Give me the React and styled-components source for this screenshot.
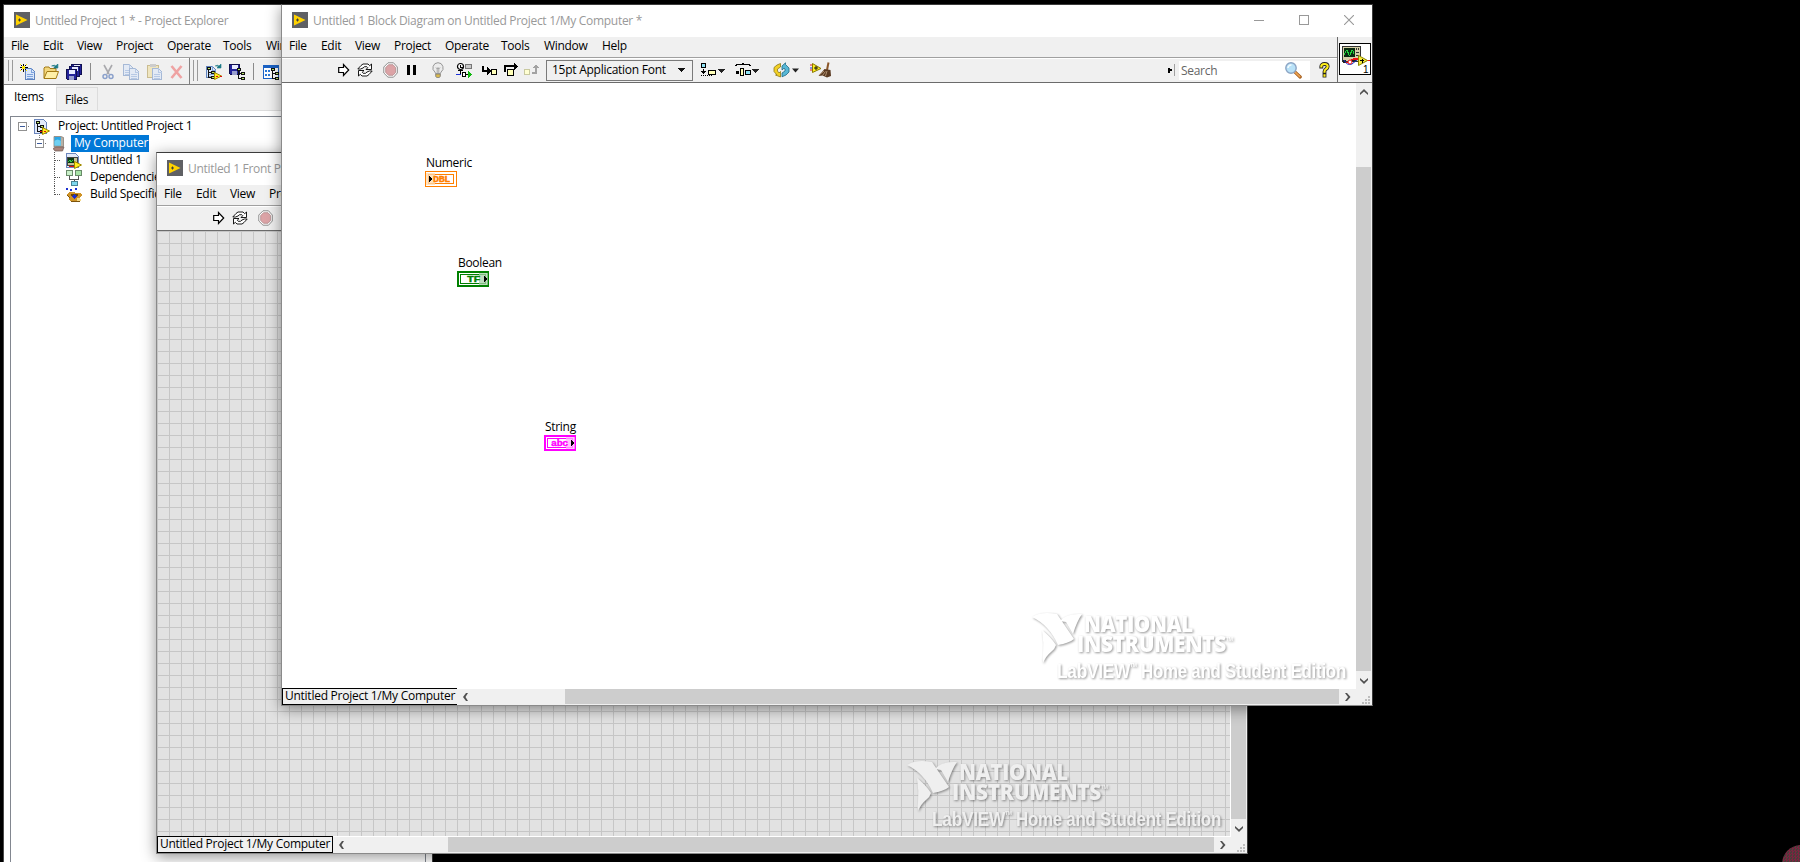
import React from "react";
import styled, { createGlobalStyle } from "styled-components";

const Global = createGlobalStyle`
  * { box-sizing: border-box; }
  html, body { margin: 0; background: #000; overflow: hidden; }
  body {
    font-family: "Open Sans", "Noto Sans", sans-serif;
    font-size: 12px;
    letter-spacing: -0.3px;
    line-height: 16px;
    color: #000;
    white-space: nowrap;
  }
  svg { display: block; flex: none; }
`;

/* ---------- window chrome ---------- */

const Desktop = styled.main`
  position: relative;
  width: 1800px;
  height: 862px;
  overflow: hidden;
  background: #000;
`;

const Frame = styled.section`
  position: absolute;
  left: ${(p) => p.$x}px;
  top: ${(p) => p.$y}px;
  width: ${(p) => p.$w}px;
  height: ${(p) => p.$h}px;
  display: flex;
  flex-direction: column;
  border: 1px solid ${(p) => p.$edge || "#8a8a8a"};
  border-top-color: #3c3c3c;
  border-right-color: #3c3c3c;
  background: #f0f0f0;
  box-shadow: ${(p) => (p.$flat ? "none" : "0 3px 14px rgba(0, 0, 0, 0.42)")};
  overflow: hidden;
`;

const TitleBar = styled.header`
  display: flex;
  align-items: center;
  flex: none;
  height: 32px;
  padding: 0 18px 2px 10px;
  background: #fff;
  color: #999;
`;

const TitleText = styled.span`
  flex: 1;
  padding: 2px 0 0 5px;
  letter-spacing: ${(p) => p.$track || -0.3}px;
`;

const TitleButtons = styled.div`
  display: flex;
  align-items: center;
  gap: 35px;
`;

const MenuBar = styled.nav`
  display: flex;
  align-items: center;
  flex: none;
  height: 20px;
  padding: 0 0 2px 7px;
`;

const MenuItem = styled.span`
  width: ${(p) => p.$w}px;
  flex: none;
`;

const Head = styled.div`
  display: flex;
  flex: none;
  height: 46px;
  border-bottom: 1px solid #6b6b6b;
`;

const HeadMain = styled.div`
  flex: 1;
  min-width: 0;
`;

const Toolbar = styled.div`
  display: flex;
  align-items: flex-start;
  height: 25px;
  padding-top: 3px;
  border-top: 1px solid #a0a0a0;
  box-shadow: inset 0 1px 0 #fff;
`;

const Tool = styled.span`
  flex: none;
  margin-left: ${(p) => p.$gap || 0}px;
  padding-top: 1px;
`;

const FontPicker = styled.div`
  display: flex;
  align-items: center;
  justify-content: space-between;
  flex: none;
  width: 147px;
  height: 21px;
  margin: -1px 0 0 6px;
  padding: 0 7px 1px 5px;
  border: 1px solid #7a7a7a;
  letter-spacing: -0.26px;
`;

const Grow = styled.span`
  flex: 1;
`;

const SearchHandle = styled.div`
  display: flex;
  align-items: center;
  width: 7px;
  height: 12px;
  margin: 3px 4px 0 0;
  border-right: 1px solid #a0a0a0;
`;

const SearchBox = styled.div`
  display: flex;
  align-items: center;
  justify-content: space-between;
  width: 131px;
  height: 19px;
  padding: 0 8px 0 2px;
  background: #fff;
  color: #666;
`;

const HelpSlot = styled.div`
  width: 27px;
  padding: 1px 0 0 9px;
`;

const IconPane = styled.div`
  width: 34px;
  margin-right: 1px;
  padding: 6px 0 0 1px;
  border-left: 1px solid #6b6b6b;
`;

/* ---------- canvas and scroll bars ---------- */

const Body = styled.div`
  display: flex;
  flex: 1;
  min-height: 0;
`;

const Canvas = styled.div`
  position: relative;
  flex: 1;
  background-color: ${(p) => (p.$grid ? "#e2e2e2" : "#fff")};
  background-image: ${(p) =>
    p.$grid
      ? "linear-gradient(to right, #c6c6c6 1px, transparent 1px), linear-gradient(to bottom, #c6c6c6 1px, transparent 1px)"
      : "none"};
  background-size: 12px 12px;
  border-right: ${(p) => (p.$grid ? "1px solid #fff" : "0")};
`;

const VBar = styled.div`
  display: flex;
  flex-direction: column;
  width: 15px;
  margin-right: 1px;
`;

const VEnd = styled.div`
  display: flex;
  align-items: center;
  justify-content: center;
  flex: none;
  height: 17px;
  padding-bottom: ${(p) => (p.$raised ? 2 : 0)}px;
`;

const VThumb = styled.div`
  flex: 1;
  margin-top: 67px;
  background: #cdcdcd;
`;

const Footer = styled.div`
  display: flex;
  flex: none;
  height: 17px;
`;

const Target = styled.div`
  width: ${(p) => (p.$open ? 175 : 176)}px;
  height: 17px;
  padding: 0 0 0 2px;
  border: 1px solid #000;
  border-right-width: ${(p) => (p.$open ? 0 : 1)}px;
  line-height: 14px;
  letter-spacing: -0.26px;
  overflow: hidden;
`;

const HBar = styled.div`
  display: flex;
  flex: 1;
  height: 17px;
  padding-bottom: 1px;
  border-top: 1px solid #fff;
`;

const HEnd = styled.div`
  display: flex;
  align-items: center;
  justify-content: center;
  flex: none;
  width: 17px;
  padding-right: ${(p) => (p.$far ? 1 : 0)}px;
`;

const HThumb = styled.div`
  flex: 1;
  margin-left: ${(p) => p.$offset}px;
  background: #cdcdcd;
`;

const Corner = styled.div`
  display: flex;
  align-items: flex-end;
  justify-content: flex-end;
  width: 16px;
  padding: 0 2px 1px 0;
`;

const Watermark = styled.svg`
  position: absolute;
  right: ${(p) => p.$right}px;
  bottom: 3px;
  filter: drop-shadow(1px 1px 1px rgba(0, 0, 0, 0.4));
`;

const Node = styled.div`
  position: absolute;
  left: ${(p) => p.$x}px;
  top: ${(p) => p.$y}px;
  display: flex;
  flex-direction: column;
`;

const NodeLabel = styled.span`
  height: 17px;
  padding: 1px 0 0 1px;
`;

/* ---------- project explorer parts ---------- */

const ExplorerTools = styled.div`
  display: flex;
  flex: none;
  height: 28px;
  border-top: 1px solid #a0a0a0;
  border-bottom: 1px solid #808080;
  box-shadow: inset 0 1px 0 #fff;
`;

const ToolGroup = styled.div`
  display: flex;
  align-items: flex-start;
  height: 26px;
  padding-top: 5px;
  border-right: ${(p) => (p.$last ? "0" : "1px solid #808080")};
`;

const Grip = styled.span`
  width: 5px;
  height: 21px;
  margin: -3px 0 0 ${(p) => p.$gap}px;
  border: solid #9a9a9a;
  border-width: 0 1px;
`;

const Divider = styled.span`
  width: 1px;
  height: 17px;
  margin-left: ${(p) => p.$gap}px;
  background: #8a8a8a;
`;

const Tabs = styled.div`
  display: flex;
  align-items: flex-end;
  flex: none;
  height: 26px;
  padding-top: 1px;
  box-shadow: inset 0 -1px 0 #dcdcdc;
`;

const Tab = styled.span`
  height: ${(p) => (p.$active ? 26 : 24)}px;
  width: ${(p) => (p.$active ? 52 : 42)}px;
  padding: ${(p) => (p.$active ? "4px 0 0 10px" : "4px 0 0 8px")};
  border: ${(p) => (p.$active ? "0" : "1px solid #dcdcdc")};
  background: ${(p) => (p.$active ? "#fff" : "#f0f0f0")};
`;

const TabPage = styled.div`
  display: flex;
  flex: 1;
  padding: 5px 6px 0;
  background: #fff;
`;

const Tree = styled.div`
  flex: 1;
  padding-top: 1px;
  border: 1px solid #828790;
  border-bottom: 0;
`;

const TreeRow = styled.div`
  display: flex;
  align-items: center;
  height: 17px;
  padding-left: ${(p) => p.$indent}px;
`;

const TreeText = styled.span`
  height: 17px;
  margin-left: ${(p) => p.$gap}px;
  padding: 0 ${(p) => (p.$selected ? 1 : 0)}px 0 3px;
  background: ${(p) => (p.$selected ? "#0078d7" : "transparent")};
  color: ${(p) => (p.$selected ? "#fff" : "#000")};
  letter-spacing: ${(p) => (p.$selected ? -0.2 : -0.3)}px;
`;

const Bubble = styled.div`
  position: absolute;
  left: 1782px;
  top: 845px;
  width: 38px;
  height: 38px;
  border-radius: 50%;
  background: repeating-conic-gradient(#7c2440 0 25%, #46403a 0 50%) 0 0 / 3px 3px;
`;

/* ---------- drawings ---------- */

const Art = ({ w = 16, h = 16, soft, children }) => (
  <svg width={w} height={h} viewBox={`0 0 ${w} ${h}`} shapeRendering={soft ? "auto" : "crispEdges"}>
    {children}
  </svg>
);

const Logo = () => (
  <Art soft>
    <rect width="16" height="16" fill="#5f6064" />
    <path d="M2 2.5 13.5 8 2 13.5z" fill="#ffd200" />
    <path d="M4 8h3M5.5 6.5v3" stroke="#3d3d3d" strokeWidth="1" />
  </Art>
);

const Minimize = () => (
  <Art w={10} h={10}><rect y="5" width="10" height="1" fill="#999" /></Art>
);
const Maximize = () => (
  <Art w={10} h={10}><rect x=".5" y=".5" width="9" height="9" fill="none" stroke="#999" /></Art>
);
const Close = () => (
  <Art w={10} h={10} soft><path d="m0 0 10 10M10 0 0 10" stroke="#999" strokeWidth="1.1" /></Art>
);

const Run = () => (
  <Art w={12} soft>
    <path d="M.7 5.500h4.800V2.500L10.700 8 5.500 13.500v-3H.7z" fill="#fff" stroke="#000" strokeWidth="1.200" />
  </Art>
);

/* two folded arrows chasing each other */
const RunLoop = () => (
  <Art soft>
    <g fill="#fff" stroke="#000" strokeWidth=".9">
      <path d="M3.500 7 .8 7 4 3.500 6 2h5l1.700 1.700L14.500 2v5.500H9L10.800 5.700 9.800 4.700H7.500L6 6z" />
      <path d="M12.500 9h2.700L12 12.500 10 14H5l-1.700-1.700L1.500 14V8.500H7l-1.800 1.800 1 1h2.300L10 10z" />
    </g>
  </Art>
);

const Abort = () => (
  <Art w={15} soft>
    <path d="M5 .8h5.500L14.300 5v6l-3.800 4.200H5L.8 11V5z" fill="#fff" stroke="#8c8c8c" />
    <path d="M5.500 2.700h4.500l2.600 2.900v4.800L10 13.300H5.500l-2.800-2.900V5.600z" fill="#dca3a6" stroke="#b08a8c" strokeWidth=".8" />
  </Art>
);

const Pause = () => (
  <Art w={10}><path d="M0 3h3v10H0zM6 3h3v10H6z" fill="#000" /></Art>
);

const Bulb = () => (
  <Art w={12} soft>
    <path d="M6 .7a5.200 5.200 0 0 0-3 9.400l.6 1.600h4.800l.6-1.600A5.200 5.200 0 0 0 6 .7z" fill="#ececec" stroke="#979797" />
    <path d="M4 5.500 5.200 7 6 5.500 6.800 7 8 5.500M5.200 7v4M6.800 7v4" fill="none" stroke="#8d8d8d" strokeWidth=".7" />
    <path d="M3.700 12h4.600v2.500L7 15.600H5l-1.300-1z" fill="#d9b94e" stroke="#777" strokeWidth=".8" />
  </Art>
);

const Retain = () => (
  <Art>
    <circle cx="4.500" cy="4.500" r="3" fill="#fff" stroke="#000" strokeWidth="1.200" shapeRendering="auto" />
    <path d="M4 3h1v2h2v1H4z" fill="#000" />
    <path d="M9.500 2.500h6v4h-6z" fill="#c9c9c9" stroke="#777" />
    <path d="M4 8h1v4H4zM2 8h5v1H2zM10 12h3v1h-3z" fill="#000" />
    <path d="M0 12h5v1H0z" fill="#1b31d8" />
    <path d="M6.500 10.500h3v4h-3z" fill="#fff" stroke="#000" />
    <path d="m12 9 4 4-4 3z" fill="#10b810" />
  </Art>
);

const StepInto = () => (
  <Art>
    <path d="M1 4h2v4h3V5l4 4-4 4v-3H1z" fill="#000" />
    <rect x="10.500" y="7.500" width="5" height="5" fill="#ffffb8" stroke="#000" />
  </Art>
);
const StepOver = () => (
  <Art w={15}>
    <path d="M0 10V3h10V1l4 3-4 4V5H2v5z" fill="#000" />
    <rect x="3.500" y="7.500" width="6" height="6" fill="#ffffb8" stroke="#000" />
  </Art>
);
const StepOut = () => (
  <Art>
    <rect x=".5" y="7.500" width="5" height="5" fill="#ffffd2" stroke="#c9c9a0" />
    <path d="M8 12v-2h3V6H9l3-4 3 4h-2v6z" fill="#a2a2a2" />
  </Art>
);

const Caret = () => (
  <Art w={7} h={4}><path d="M0 0h7v1H6v1H5v1H4v1H3V3H2V2H1V1H0z" fill="#111" /></Art>
);

const DropMark = () => <path d="M17 7h7v1h-1v1h-1v1h-1v1h-1v-1h-1V9h-1V8h-1z" fill="#222" />;

const Align = () => (
  <Art w={24}>
    <rect x=".5" y="1.500" width="4" height="4" fill="#8fe3f5" stroke="#000" />
    <path d="M2 7h1v3H2zM0 9h5v1H4v1H3v1H2v-1H1v-1H0zM0 13h1v1H0zM2 13h1v1H2zM4 13h1v1H4zM6 13h1v1H6zM8 13h1v1H8zM10 13h1v1h-1z" fill="#000" />
    <rect x="7.500" y="8.500" width="7" height="4" fill="#ffffb8" stroke="#000" />
    <DropMark />
  </Art>
);

const Distribute = () => (
  <Art w={25}>
    <path d="M0 4V3h1V2h6V1h2v1h6v1h1v1h-2V3H2v1zM1 9h3v3H1z" fill="#000" />
    <rect x="5.500" y="6.500" width="3" height="7" fill="#ffffb8" stroke="#000" />
    <rect x="10.500" y="8.500" width="5" height="4" fill="#8fe3f5" stroke="#000" />
    <DropMark />
  </Art>
);

const Reorder = () => (
  <Art w={26} soft>
    <path d="M7.500 1.500 4 3 1 5.500v4L4 13H2.500L7.500 15V9.500L6 11 4.500 9V7l3-2z" fill="#f2d024" stroke="#8f7a18" strokeWidth=".8" />
    <path d="M9 4 12.500.8V2.500L16 6v4l-3 3-4 1.800V11l3-2V7l-1-.8L9 8z" fill="#57b8d6" stroke="#1f6a86" strokeWidth=".8" />
    <path d="M19 6.500h7L22.500 10.500z" fill="#222" />
  </Art>
);

const CleanUp = () => (
  <Art w={22} soft>
    <path d="M0 3h4M0 8h2" stroke="#e02020" />
    <path d="M0 6h2" stroke="#2030d0" />
    <path d="M2.500 1.500 11 6.500 2.500 10.500z" fill="#ffee22" stroke="#8a7a00" />
    <path d="M4 6h4M6 4v4" stroke="#111" />
    <path d="M18.500.5 17 8" stroke="#8a5527" strokeWidth="2" />
    <path d="M14.500 7 20.500 8l.5 6-4 1.500-4.500-2-4 .5z" fill="#5a3a22" />
    <path d="m9 13 5-4M12.500 13.500l3-4M15.500 14l1.500-5" stroke="#c6a887" strokeWidth=".8" />
  </Art>
);

const Lens = () => (
  <Art w={17} h={17} soft>
    <path d="m9.800 9.800 5.400 5.200" stroke="#a25c1c" strokeWidth="3.200" strokeLinecap="round" />
    <path d="m9.800 9.800 5 4.800" stroke="#eda352" strokeWidth="1.600" strokeLinecap="round" />
    <circle cx="6" cy="6" r="5.200" fill="#b9e2f8" stroke="#8ba4c4" strokeWidth="1.400" />
    <path d="M3 6a3.200 3.200 0 0 1 3.500-3" stroke="#f3fbff" strokeWidth="1.600" fill="none" />
  </Art>
);

const Help = () => (
  <Art w={11} soft>
    <g fill="none" strokeLinecap="square">
      <path d="M2.300 4.500Q2.300 2 5.500 2T8.700 4.500Q8.700 6 7 7 5.500 8 5.500 9.800M5.500 13.300v.4" stroke="#222" strokeWidth="3.800" />
      <path d="M2.300 4.500Q2.300 2 5.500 2T8.700 4.500Q8.700 6 7 7 5.500 8 5.500 9.800M5.500 13.300v.4" stroke="#ffef1a" strokeWidth="2.100" />
    </g>
  </Art>
);

const ViIcon = () => (
  <Art w={32} h={32}>
    <rect x=".5" y=".5" width="31" height="31" fill="#fff" stroke="#000" />
    <rect x="3.500" y="3.500" width="18" height="15" fill="#d6cfa6" stroke="#333" />
    <rect x="5" y="5" width="11" height="9" fill="#0a2a10" />
    <path d="m5 12 2-4 1-1 2 5h1l2-5 1 1 1 3" fill="none" stroke="#21d43a" />
    <path d="M17 5h1v2h-1zM19 5h1v2h-1zM17 9h3v1h-3zM17 12h3v1h-3z" fill="#333" />
    <path d="M4 17h3v3H4zM13 16h4v3h-4z" fill="#222" />
    <path d="M5 17q3 6 8 4l5-4" stroke="#1430d0" fill="none" shapeRendering="auto" />
    <path d="M8 20q5-5 11-4M25 17.500h6" stroke="#e11" strokeWidth="1.400" fill="none" />
    <circle cx="11" cy="19" r="2" fill="#fff" stroke="#e11" shapeRendering="auto" />
    <path d="m19.500 12.500 9 5-9 5z" fill="#f4e93a" stroke="#8a8200" shapeRendering="auto" />
    <path d="M21 17h4v1h-4zM22.500 15.500h1v4h-1z" fill="#000" />
    <text x="24" y="29.500" fontFamily="Liberation Sans, sans-serif" fontSize="10" fill="#000">1</text>
  </Art>
);

const chevrons = {
  up: "M0 6 4 2 8 6V8L4 4.500 0 8z",
  down: "M0 2v2l4 4 4-4V2L4 5.500z",
  left: "M6 0H4L1 4l3 4h2L3.500 4z",
  right: "M2 0h2l3.500 4L4 8H2l3-4z",
};
const Chevron = ({ dir }) => (
  <Art w={8} h={8} soft><path d={chevrons[dir]} fill="#505050" /></Art>
);

const SizeGrip = () => (
  <Art w={8} h={8}>
    <path d="M6 0h2v2H6zM3 3h2v2H3zM6 3h2v2H6zM0 6h2v2H0zM3 6h2v2H3zM6 6h2v2H6z" fill="#bdbdbd" />
  </Art>
);

const NiMark = ({ tone, right }) => (
  <Watermark $right={right} width="324" height="78" viewBox="0 0 324 78">
    <g fill={tone}>
      <path d="M3 10q9-6 25-3l17 25q-5 4-16 6Q20 18 3 10z" />
      <path d="M31 14q6-8 22-7-5 7-9 20L37 15z" />
      <path d="M13 23q8 6 14 15-1 4-5 7-5 4-8 11-1-4 0-8 1-12-1-25z" />
      <g fontFamily="Open Sans, sans-serif" fontWeight="800" fontSize="22">
        <text x="55" y="24.500" textLength="109" lengthAdjust="spacingAndGlyphs">NATIONAL</text>
        <text x="48" y="45" textLength="149" lengthAdjust="spacingAndGlyphs">INSTRUMENTS</text>
        <text x="197" y="34" fontSize="5" fontWeight="600">TM</text>
      </g>
      <g fontFamily="Liberation Sans Narrow, Liberation Sans, sans-serif" fontWeight="700" fontSize="20.500">
        <text x="28" y="71" textLength="73" lengthAdjust="spacingAndGlyphs">LabVIEW</text>
        <text x="101" y="60" fontSize="5">TM</text>
        <text x="112" y="71" textLength="205" lengthAdjust="spacingAndGlyphs">Home and Student Edition</text>
      </g>
    </g>
  </Watermark>
);

const Terminal = ({ color, tint, code, heavy, indicator, textX, textW }) => (
  <Art w={32}>
    <rect width="32" height="16" fill={color} />
    <rect x={heavy ? 2 : 1} y={heavy ? 2 : 1} width={heavy ? 28 : 30} height={heavy ? 12 : 14} fill="#fff" />
    <rect x="3.500" y="3.500" width="25" height="9" fill="#fff" stroke={color} />
    <rect x={indicator ? 1 : 22} y="2" width="9" height="12" fill={tint} fillOpacity=".75" />
    <path d={indicator ? "M4 5h1v1h1v1h1v2H6v1H5v1H4z" : "M27 5h1v1h1v1h1v2h-1v1h-1v1h-1z"} fill="#000" />
    <text x={textX} y="10.700" textLength={textW} lengthAdjust="spacingAndGlyphs" fill={color}
      stroke={color} strokeWidth=".35"
      fontFamily="Liberation Mono, monospace" fontWeight="700" fontSize="8.500">{code}</text>
  </Art>
);

/* explorer toolbar */
const Page = ({ x = 0, y = 0 }) => (
  <g transform={`translate(${x} ${y})`}>
    <path d="M.5.500h6l3 3v8h-9z" fill="#d8e6fa" stroke="#5f83bd" />
    <path d="M6 0v4h4M2 6h6M2 8h6M2 10h6" fill="none" stroke="#7fa3dc" />
  </g>
);
const NewDoc = () => (
  <Art>
    <Page x={5} y={4} />
    <path d="M3 0h1v3H3zM3 5h1v3H3zM0 3h2v1H0zM5 3h3v1H5zM1 1h1v1H1zM5 1h1v1H5zM1 5h1v1H1zM5 5h1v1H5z" fill="#000" />
    <path d="M2 2h3v3H2zM0 0h1v1H0zM6 6h1v1H6zM6 0h1v1H6zM0 6h1v1H0z" fill="#ffe800" />
  </Art>
);
const OpenDoc = () => (
  <Art soft>
    <path d="M1 14V4l1-1h4l1 1.500h6V7" fill="#f3d77c" stroke="#a27a16" />
    <path d="M1 14.500 4 7.500h11.500l-2.500 7z" fill="#fff0a8" stroke="#a27a16" />
    <path d="M8.500 2q3-2 5.500 1M14.800 0v4h-4z" fill="#1d7a86" stroke="#1d7a86" strokeWidth=".8" />
  </Art>
);
const Disk = ({ x = 0, y = 0 }) => (
  <g transform={`translate(${x} ${y})`}>
    <path d="M.5.500h10v10h-9l-1-1z" fill="#23239a" stroke="#10104f" />
    <path d="M3 1h6v4H3z" fill="#e8ecff" />
    <path d="M3 7h5v4H3z" fill="#9aa0cf" />
  </g>
);
const SaveAll = () => <Art><Disk x={5} y={0} /><Disk x={3} y={2} /><Disk x={0} y={5} /></Art>;
const Cut = () => (
  <Art w={12} soft>
    <path d="m2 1 5 9M10 1l-5 9" stroke="#a9a9ad" strokeWidth="1.600" />
    <circle cx="3" cy="12.500" r="2" fill="none" stroke="#8ba1cb" strokeWidth="1.500" />
    <circle cx="9" cy="12.500" r="2" fill="none" stroke="#8ba1cb" strokeWidth="1.500" />
  </Art>
);
const Copy = () => <Art><g opacity=".5"><Page /><Page x={6} y={4} /></g></Art>;
const Paste = () => (
  <Art>
    <g opacity=".5">
      <path d="M.5 1.500h11v12H.5z" fill="#efdb8f" stroke="#a58a35" />
      <path d="M3 0h6v3H3z" fill="#aaa" />
      <Page x={5} y={4} />
    </g>
  </Art>
);
const Remove = () => (
  <Art w={13} soft><path d="m1.500 2 10 12M11.500 2l-10 12" stroke="#efa3a3" strokeWidth="2.600" /></Art>
);
const Branches = ({ x = 0, y = 0 }) => (
  <g transform={`translate(${x} ${y})`}>
    <path d="M1 1h1v10H1zM1 5h5v1H1zM1 10h5v1H1z" fill="#111" />
    <path d="M0 0h4v3H0zM4 4h4v3H4zM4 9h4v3H4z" fill="#111" />
    <path d="M1 1h2v1H1zM5 5h2v1H5zM5 10h2v1H5z" fill="#b9e86a" />
  </g>
);
const OpenProject = () => (
  <Art>
    <Page x={0} y={2} />
    <Branches x={1} y={3} />
    <path d="M9 2q3-2 5 1M15 0v4h-4z" fill="#1d7a86" stroke="#1d7a86" strokeWidth=".6" shapeRendering="auto" />
    <path d="m8.500 8.500 7 3.500-7 3.500z" fill="#ffee22" stroke="#a08a00" shapeRendering="auto" />
    <path d="M10 12h2M14 12h2" stroke="#d11" />
  </Art>
);
const SaveProject = () => <Art><Disk /><Branches x={8} y={4} /></Art>;
const ClassBrowser = () => (
  <Art>
    <rect x=".5" y="1.500" width="15" height="13" fill="#fff" stroke="#1b62c4" />
    <path d="M0 1h16v3H0z" fill="#1b62c4" />
    <path d="M2 6h2v2H2zM5 6h2v2H5zM2 10h2v2H2zM5 10h2v2H5z" fill="#2a78d8" />
    <Branches x={8} y={4} />
  </Art>
);

/* project tree */
const Toggle = ({ up }) => (
  <Art w={12} h={17}>
    {up && <path d="M4 0h1v1H4zM4 2h1v1H4z" fill="#777" />}
    <rect x=".5" y="4.500" width="8" height="8" fill="#fff" stroke="#919191" />
    <path d="M2 8h5v1H2z" fill="#3c5a9a" />
    <path d="M10 8h1v1h-1z" fill="#777" />
  </Art>
);
const Elbow = ({ last }) => (
  <svg width="8" height="17" viewBox="0 0 8 17" shapeRendering="crispEdges">
    <path d={last ? "M.5 0v9" : "M.5 0v17"} stroke="#555" strokeDasharray="1 1" />
    <path d="M1 8.500h6" stroke="#555" strokeDasharray="1 1" />
  </svg>
);
const ProjectIcon = () => (
  <Art>
    <path d="M.5.500h9l3 3v11H.5z" fill="#e2eafa" stroke="#6b86bd" />
    <Branches x={2} y={2} />
    <path d="m8.500 8.500 7 3.500-7 3.500z" fill="#ffee22" stroke="#a08a00" shapeRendering="auto" />
    <path d="M6 12h2M10 12h2" stroke="#d11" />
  </Art>
);
const ComputerIcon = () => (
  <Art w={12} soft>
    <path d="M1 .5h7l2.500 1v9l-2.500.5H1z" fill="#b9b1a5" stroke="#7d746b" strokeWidth=".7" />
    <path d="M1.500 1h6.300v8.500H1.500z" fill="#2aa6e6" />
    <path d="M1.500 5q3-3 6.300 0v4.500H1.500z" fill="#6fd0f2" />
    <path d="M0 12.500 3 11h8l-1.500 4H2z" fill="#a9847c" stroke="#6f5a55" strokeWidth=".7" />
  </Art>
);
const ViFileIcon = () => (
  <Art>
    <path d="M.5.500h9l3 3v11H.5z" fill="#e2eafa" stroke="#6b86bd" />
    <rect x="1" y="4" width="10" height="8" fill="#c9c39a" stroke="#444" />
    <rect x="2" y="5" width="6" height="5" fill="#0b3a16" />
    <path d="m2 9 2-2 1 2 2-2" stroke="#2fd048" fill="none" />
    <path d="m8.500 8.500 7 3.500-7 3.500z" fill="#ffee22" stroke="#a08a00" shapeRendering="auto" />
    <path d="M3 13h5" stroke="#d11" />
  </Art>
);
const DependenciesIcon = () => (
  <Art>
    <path d="M3.500 5v4h9V5M8 9v3" fill="none" stroke="#555" />
    <rect x=".5" y=".5" width="6" height="5" fill="#c9f0c9" stroke="#6a8a6a" />
    <rect x="9.500" y=".5" width="6" height="5" fill="#a6e3a6" stroke="#6a8a6a" />
    <rect x="5.500" y="11.500" width="6" height="4" fill="#7fd8ee" stroke="#4a8494" />
  </Art>
);
const BuildIcon = () => (
  <Art>
    <path d="M0 1h2v2H0zM4 2h2v2H4zM9 1h2v2H9z" fill="#1c2fd0" />
    <path d="M3 5h5l2 1h4l2 2-2 2v5H5l-2-2v-3L0 8z" fill="#cf9327" />
    <path d="M0 8h1l3 2v1H3zM5 14h9v1H5z" fill="#7d540c" />
    <path d="M5 7h7v2H5z" fill="#6b4608" />
    <path d="M8 7h1v1h1v1h1v1h-1v1H9v1H8v-1H7v-1H6V9h1V8h1z" fill="#1c2fd0" />
    <path d="M11 11h3v1h1v2h-4z" fill="#f4d98a" />
  </Art>
);

/* ---------- composition ---------- */

const menus = [
  ["File", 32], ["Edit", 34], ["View", 39], ["Project", 51],
  ["Operate", 56], ["Tools", 43], ["Window", 58], ["Help", 40],
];

const Menus = ({ count = menus.length }) => (
  <MenuBar>
    {menus.slice(0, count).map(([name, w]) => <MenuItem key={name} $w={w}>{name}</MenuItem>)}
  </MenuBar>
);

const tools = [
  [Run, 56], [RunLoop, 7], [Abort, 10], [Pause, 9], [Bulb, 15],
  [Retain, 12], [StepInto, 9], [StepOver, 7], [StepOut, 5],
];

function ViWindow({ x, y, title, menuCount, grid, hOffset, children }) {
  return (
    <Frame $x={x} $y={y} $w={1092} $h={702}>
      <TitleBar>
        <Logo />
        <TitleText>{title}</TitleText>
        <TitleButtons><Minimize /><Maximize /><Close /></TitleButtons>
      </TitleBar>
      <Head>
        <HeadMain>
          <Menus count={menuCount} />
          <Toolbar>
            {tools.map(([Icon, gap], i) => <Tool key={i} $gap={gap}><Icon /></Tool>)}
            <FontPicker>15pt Application Font<Caret /></FontPicker>
            <Tool $gap={8}><Align /></Tool>
            <Tool $gap={10}><Distribute /></Tool>
            <Tool $gap={13}><Reorder /></Tool>
            <Tool $gap={11}><CleanUp /></Tool>
            <Grow />
            <SearchHandle>
              <Art w={4} h={5}><path d="M0 0h2v1h2v2H2v2H0z" fill="#000" /></Art>
            </SearchHandle>
            <SearchBox>Search<Lens /></SearchBox>
            <HelpSlot><Help /></HelpSlot>
          </Toolbar>
        </HeadMain>
        <IconPane><ViIcon /></IconPane>
      </Head>
      <Body>
        <Canvas $grid={grid}>
          {children}
          <NiMark tone={grid ? "#efefef" : "#fff"} right={grid ? 2 : 3} />
        </Canvas>
        <VBar>
          <VEnd $raised><Chevron dir="up" /></VEnd>
          <VThumb />
          <VEnd><Chevron dir="down" /></VEnd>
        </VBar>
      </Body>
      <Footer>
        <Target $open={!grid}>Untitled Project 1/My Computer</Target>
        <HBar>
          <HEnd><Chevron dir="left" /></HEnd>
          <HThumb $offset={hOffset} />
          <HEnd $far><Chevron dir="right" /></HEnd>
        </HBar>
        <Corner><SizeGrip /></Corner>
      </Footer>
    </Frame>
  );
}

function ProjectExplorer() {
  return (
    <Frame $x={3} $y={4} $w={430} $h={900} $edge="#4a4a4a" $flat>
      <TitleBar>
        <Logo />
        <TitleText $track={-0.33}>Untitled Project 1 * - Project Explorer</TitleText>
      </TitleBar>
      <Menus count={7} />
      <ExplorerTools>
        <ToolGroup>
          <Grip $gap={4} />
          <Tool $gap={7}><NewDoc /></Tool>
          <Tool $gap={7}><OpenDoc /></Tool>
          <Tool $gap={7}><SaveAll /></Tool>
          <Divider $gap={8} />
          <Tool $gap={11}><Cut /></Tool>
          <Tool $gap={9}><Copy /></Tool>
          <Tool $gap={8}><Paste /></Tool>
          <Tool $gap={7}><Remove /></Tool>
          <Tool $gap={6} />
        </ToolGroup>
        <ToolGroup $last>
          <Grip $gap={3} />
          <Tool $gap={8}><OpenProject /></Tool>
          <Tool $gap={7}><SaveProject /></Tool>
          <Divider $gap={8} />
          <Tool $gap={9}><ClassBrowser /></Tool>
        </ToolGroup>
      </ExplorerTools>
      <Tabs><Tab $active>Items</Tab><Tab>Files</Tab></Tabs>
      <TabPage>
        <Tree>
          <TreeRow $indent={7}><Toggle /><Tool $gap={4}><ProjectIcon /></Tool><TreeText $gap={5}>Project: Untitled Project 1</TreeText></TreeRow>
          <TreeRow $indent={24}><Toggle up /><Tool $gap={6}><ComputerIcon /></Tool><TreeText $gap={6} $selected>My Computer</TreeText></TreeRow>
          <TreeRow $indent={43}><Elbow /><Tool $gap={4}><ViFileIcon /></Tool><TreeText $gap={5}>Untitled 1</TreeText></TreeRow>
          <TreeRow $indent={43}><Elbow /><Tool $gap={4}><DependenciesIcon /></Tool><TreeText $gap={5}>Dependencies</TreeText></TreeRow>
          <TreeRow $indent={43}><Elbow last /><Tool $gap={4}><BuildIcon /></Tool><TreeText $gap={5}>Build Specifications</TreeText></TreeRow>
        </Tree>
      </TabPage>
    </Frame>
  );
}

export default function App() {
  return (
    <Desktop>
      <Global />
      <ProjectExplorer />
      <ViWindow x={156} y={152} grid hOffset={98} menuCount={4}
        title="Untitled 1 Front Panel on Untitled Project 1/My Computer *" />
      <ViWindow x={281} y={4} hOffset={91}
        title="Untitled 1 Block Diagram on Untitled Project 1/My Computer *">
        <Node $x={143} $y={71}>
          <NodeLabel>Numeric</NodeLabel>
          <Terminal color="#ff8000" tint="#ffd9ae" code="DBL" indicator textX={8} textW={17} />
        </Node>
        <Node $x={175} $y={171}>
          <NodeLabel>Boolean</NodeLabel>
          <Terminal color="#008000" tint="#a6cfa6" code="TF" heavy textX={10} textW={13} />
        </Node>
        <Node $x={262} $y={335}>
          <NodeLabel>String</NodeLabel>
          <Terminal color="#ff00ff" tint="#ffb0ff" code="abc" heavy textX={7} textW={17} />
        </Node>
      </ViWindow>
      <Bubble />
    </Desktop>
  );
}
